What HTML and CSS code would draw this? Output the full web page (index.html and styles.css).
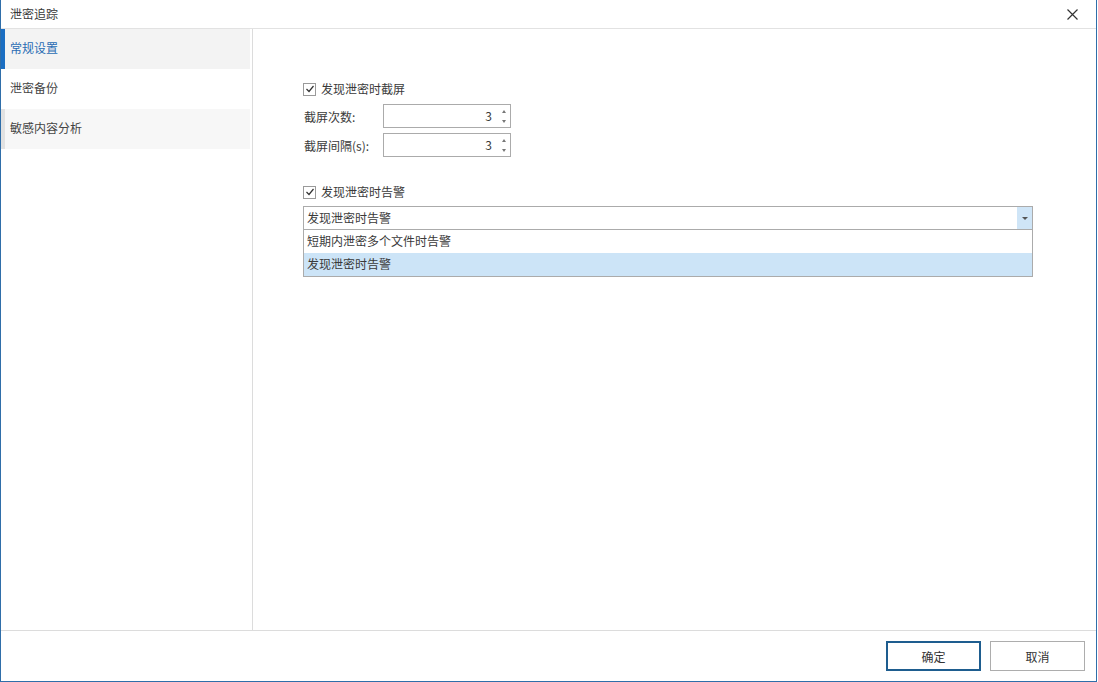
FILE: index.html
```html
<!DOCTYPE html>
<html lang="zh-CN">

<head>
    <meta charset="UTF-8">
    <meta name="viewport" content="width=device-width, initial-scale=1.0">
    <title>泄密追踪</title>
    <link rel="stylesheet" href="styles.css">
</head>

<body>
    <div class="window">
        <div class="titlebar">
            <span class="title">泄密追踪</span>
            <span class="close">
                <svg width="11" height="11" viewBox="0 0 11 11">
                    <path d="M0.5 0.5 L10.5 10.5 M10.5 0.5 L0.5 10.5" stroke="#333" stroke-width="1.2" fill="none" />
                </svg>
            </span>
        </div>

        <div class="main">
            <div class="sidebar">
                <div class="nav-item active">常规设置</div>
                <div class="nav-item">泄密备份</div>
                <div class="nav-item muted">敏感内容分析</div>
            </div>

            <div class="content">
                <label class="check-row">
                    <span class="checkbox">
                        <svg width="10" height="10" viewBox="0 0 10 10">
                            <path d="M1.5 5 L4 7.5 L8.5 2" stroke="#333" stroke-width="1.2" fill="none" />
                        </svg>
                    </span>
                    发现泄密时截屏
                </label>

                <div class="field-row">
                    <span class="field-label">截屏次数:</span>
                    <div class="spinbox">
                        <span class="spin-value">3</span>
                        <span class="spin-arrows">
                            <span class="arrow-up"></span>
                            <span class="arrow-down"></span>
                        </span>
                    </div>
                </div>

                <div class="field-row">
                    <span class="field-label">截屏间隔(s):</span>
                    <div class="spinbox">
                        <span class="spin-value">3</span>
                        <span class="spin-arrows">
                            <span class="arrow-up"></span>
                            <span class="arrow-down"></span>
                        </span>
                    </div>
                </div>

                <label class="check-row alert-row">
                    <span class="checkbox">
                        <svg width="10" height="10" viewBox="0 0 10 10">
                            <path d="M1.5 5 L4 7.5 L8.5 2" stroke="#333" stroke-width="1.2" fill="none" />
                        </svg>
                    </span>
                    发现泄密时告警
                </label>

                <div class="combo">
                    <div class="combo-box">
                        <span class="combo-text">发现泄密时告警</span>
                        <span class="combo-button"><span class="combo-arrow"></span></span>
                    </div>
                    <div class="combo-list">
                        <div class="combo-item">短期内泄密多个文件时告警</div>
                        <div class="combo-item selected">发现泄密时告警</div>
                    </div>
                </div>
            </div>
        </div>

        <div class="footer">
            <button class="btn btn-primary">确定</button>
            <button class="btn">取消</button>
        </div>
    </div>
</body>

</html>
```

FILE: styles.css
```css
html,
body {
    margin: 0;
    padding: 0;
}

body {
    font-family: "Noto Sans CJK SC", "Noto Sans", sans-serif;
    font-size: 12px;
    color: #3a3a3a;
    background-color: #ffffff;
}

.window {
    width: 1097px;
    height: 682px;
    box-sizing: border-box;
    border: 1px solid #2f6ea9;
    border-top: none;
    display: flex;
    flex-direction: column;
}

.titlebar {
    height: 28px;
    border-bottom: 1px solid #e2e2e2;
    display: flex;
    align-items: center;
    justify-content: space-between;
    padding: 0 18px 0 9px;
    flex-shrink: 0;
}

.title {
    line-height: 28px;
}

.close {
    display: flex;
    margin-top: 1px;
}

.main {
    flex: 1;
    display: flex;
    border-bottom: 1px solid #dcdcdc;
}

.sidebar {
    width: 252px;
    border-right: 1px solid #dcdcdc;
    padding-right: 2px;
    box-sizing: border-box;
    flex-shrink: 0;
}

.nav-item {
    height: 40px;
    line-height: 38px;
    padding-left: 9px;
    color: #444;
}

.nav-item.active {
    background-color: #f3f3f3;
    border-left: 4px solid #1b6ec2;
    color: #2a6db3;
    padding-left: 5px;
}

.nav-item.muted {
    background-color: #f7f7f7;
    border-left: 4px solid #e2e2e2;
    padding-left: 5px;
}

.content {
    flex: 1;
    padding: 50px 0 0 50px;
}

.check-row {
    display: flex;
    align-items: center;
    gap: 5px;
    height: 20px;
    line-height: 20px;
}

.checkbox {
    width: 11px;
    height: 11px;
    border: 1px solid #9a9a9a;
    display: flex;
    align-items: center;
    justify-content: center;
    background-color: #fff;
}

.field-row {
    display: flex;
    align-items: center;
    margin-top: 5px;
}

.field-row .field-label {
    width: 79px;
    padding-left: 1px;
}

.spinbox {
    width: 128px;
    height: 24px;
    box-sizing: border-box;
    border: 1px solid #ababab;
    display: flex;
    align-items: center;
    justify-content: flex-end;
}

.spin-value {
    padding-right: 6px;
    line-height: 22px;
}

.spin-arrows {
    width: 12px;
    height: 22px;
    display: flex;
    flex-direction: column;
    align-items: center;
    justify-content: center;
    gap: 7px;
}

.arrow-up {
    width: 0;
    height: 0;
    border-left: 2px solid transparent;
    border-right: 2px solid transparent;
    border-bottom: 3px solid #777;
}

.arrow-down {
    width: 0;
    height: 0;
    border-left: 2px solid transparent;
    border-right: 2px solid transparent;
    border-top: 3px solid #777;
}

.alert-row {
    margin-top: 25px;
}

.combo {
    width: 730px;
    margin-top: 4px;
}

.combo-box {
    height: 24px;
    box-sizing: border-box;
    border: 1px solid #ababab;
    display: flex;
    align-items: center;
}

.combo-text {
    flex: 1;
    padding-left: 3px;
    line-height: 22px;
}

.combo-button {
    width: 15px;
    height: 22px;
    background-color: #cfe5f7;
    display: flex;
    align-items: center;
    justify-content: center;
}

.combo-arrow {
    width: 0;
    height: 0;
    border-left: 3px solid transparent;
    border-right: 3px solid transparent;
    border-top: 3px solid #555;
}

.combo-list {
    border: 1px solid #ababab;
    border-top: none;
}

.combo-item {
    height: 23px;
    line-height: 22px;
    padding-left: 3px;
}

.combo-item.selected {
    background-color: #cce4f7;
}

.footer {
    height: 50px;
    display: flex;
    align-items: flex-start;
    justify-content: flex-end;
    gap: 9px;
    padding: 10px 11px 0 0;
    box-sizing: border-box;
    flex-shrink: 0;
}

.btn {
    width: 95px;
    height: 30px;
    font-family: inherit;
    font-size: 12px;
    color: #333;
    background-color: #fff;
    border: 1px solid #adadad;
    padding: 0;
}

.btn-primary {
    border: 2px solid #1e5d8f;
}
```
